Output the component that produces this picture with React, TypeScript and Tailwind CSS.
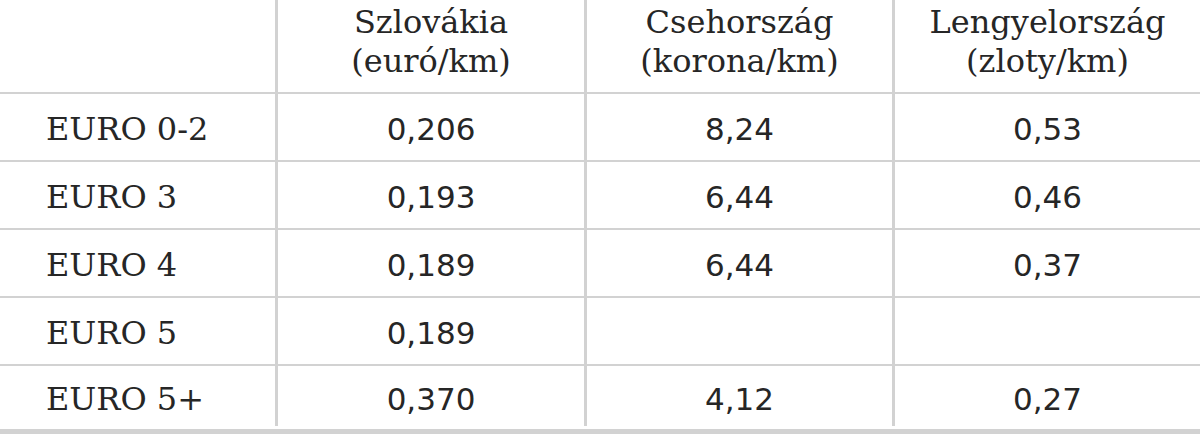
const headers = [
  ["Szlovákia", "(euró/km)"],
  ["Csehország", "(korona/km)"],
  ["Lengyelország", "(zloty/km)"],
]

const rows = [
  { label: "EURO 0-2", values: ["0,206", "8,24", "0,53"] },
  { label: "EURO 3", values: ["0,193", "6,44", "0,46"] },
  { label: "EURO 4", values: ["0,189", "6,44", "0,37"] },
  { label: "EURO 5", values: ["0,189", "", ""] },
  { label: "EURO 5+", values: ["0,370", "4,12", "0,27"] },
]

const App = () => {
  return (
    <div className="w-[1200px] h-[434px] bg-white text-[#262626] overflow-hidden" style={{ fontFamily: '"DejaVu Serif", serif' }}>
      <div className="grid grid-cols-[275px_309px_308px_308px]">
        <div className="h-[94px] border-b-2 border-[#d2d2d2]"></div>
        {headers.map(h => (
          <div key={h[0]} className="h-[94px] border-b-2 border-l-[3px] border-[#d2d2d2] flex flex-col items-center justify-center pb-[8px] text-[32px] leading-[39px]">
            <span>{h[0]}</span>
            <span>{h[1]}</span>
          </div>
        ))}

        {rows.map((row, i) => {
          const last = i === rows.length - 1
          return (
            <div key={row.label} className="contents">
              <div className={`flex items-center pl-[46px] text-[32px] ${last ? "h-[60px] pt-[6px]" : "h-[68px] pt-[4px] border-b-2 border-[#d2d2d2]"}`}>
                {row.label}
              </div>
              {row.values.map((v, j) => (
                <div
                  key={j}
                  className={`flex items-center justify-center border-l-[3px] border-[#d2d2d2] text-[31px] ${last ? "h-[60px] pt-[6px]" : "h-[68px] pt-[4px] border-b-2"}`}
                  style={{ fontFamily: '"DejaVu Sans", sans-serif' }}
                >
                  {v}
                </div>
              ))}
            </div>
          )
        })}
      </div>
      <div className="mt-[3px] h-[5px] bg-[#d2d2d2]"></div>
    </div>
  )
}

export default App
